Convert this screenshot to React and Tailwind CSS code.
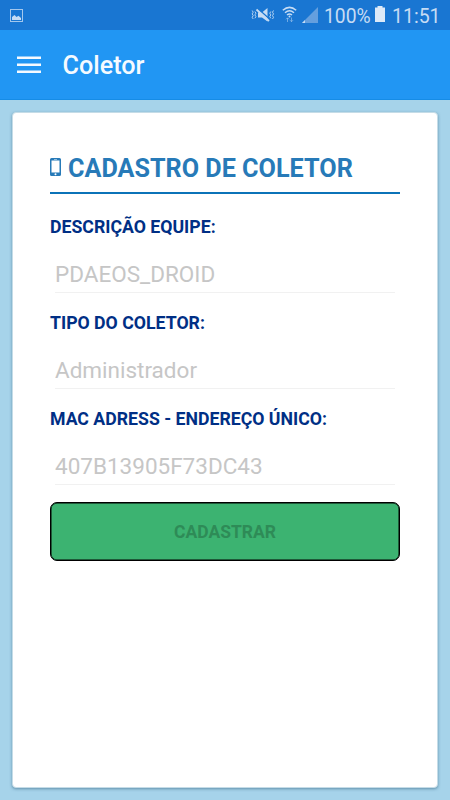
import React from 'react'

const fields = [
  { id: 'equipe', label: 'DESCRIÇÃO EQUIPE:', value: 'PDAEOS_DROID' },
  { id: 'tipo', label: 'TIPO DO COLETOR:', value: 'Administrador' },
  { id: 'mac', label: 'MAC ADRESS - ENDEREÇO ÚNICO:', value: '407B13905F73DC43' },
]

function StatusBar() {
  return (
    <div className="flex h-[30px] items-center bg-[#1976d2] pl-[10px] pr-[10px] text-[#c6dcf4]">
      <svg width="13" height="13" viewBox="0 0 13 13" className="shrink-0">
        <rect x="0.5" y="0.5" width="12" height="12" fill="none" stroke="currentColor" strokeOpacity="0.8" />
        <path d="M2 11V8l2.5-2 2 2 2-1.2L11 9v2z" fill="currentColor" />
      </svg>
      <div className="ml-auto flex items-center">
        {/* Vibrate / mute */}
        <svg width="24" height="18" viewBox="0 0 24 18" className="mr-[7px] shrink-0" fill="none" stroke="currentColor">
          <path d="M1.200 4.500l1 1.700-1 1.700 1 1.700-1 1.700 1 1.700M3.900 5.500l1 1.700-1 1.700 1 1.700-1 1.700M22.500 4.500l-1 1.700 1 1.700-1 1.700 1 1.700-1 1.700M19.800 5.500l-1 1.700 1 1.700-1 1.700 1 1.700" strokeWidth="0.9" />
          <path d="M7 6.500h4L16.500 2v13.500L11 11.500H7z" fill="currentColor" stroke="none" />
          <path d="M7 2.800l11 9.800" stroke="#1976d2" strokeWidth="1.400" />
          <path d="M5.500 3.500l12.500 11.500" strokeWidth="1.800" />
        </svg>
        <svg width="15" height="17" viewBox="0 0 15 17" className="mb-[1px] mr-[5px] shrink-0" fill="none" stroke="currentColor">
          <path d="M.8 4.200Q7.500-1.500 14.200 4.200M3 6.700q4.500-3.800 9 0M5 9q2.500-2 5 0" strokeWidth="1.500" />
          <circle cx="7.500" cy="10.500" r="1" fill="currentColor" stroke="none" />
          <path d="M5.500 16v-4M4 13.300l1.500-1.500L7 13.300M9.500 11.500v4M8 14.200l1.500 1.500 1.500-1.500" strokeOpacity="0.5" />
        </svg>
        <svg width="16" height="16" viewBox="0 0 16 16" className="mr-[6px] shrink-0">
          <path d="M16 0v16H0z" fill="#659fde" />
          <path d="M3 13v3H0z" fill="currentColor" />
        </svg>
        <span className="w-[51px] whitespace-nowrap pt-[3px] text-[19.300px] leading-none">100%</span>
        <svg width="10" height="16" viewBox="0 0 10 16" className="mb-[2px] shrink-0">
          <path d="M2.500 0h5v1.500H10V16H0V1.500h2.500z" fill="#dce9f8" />
        </svg>
        <span className="ml-[7px] w-[48px] whitespace-nowrap pt-[3px] text-[19.500px] leading-none">11:51</span>
      </div>
    </div>
  )
}

function AppBar() {
  return (
    <header className="flex h-[70px] items-center border-b border-[#168ce6] bg-[#2196f3] pl-[17px] text-[#f5faff]">
      <svg width="24" height="18" viewBox="0 0 24 18" fill="currentColor" className="shrink-0">
        <path d="M0 0.500h24v2.500H0zM0 7.500h24v2.500H0zM0 14.500h24v2.500H0z" />
      </svg>
      <h1 className="ml-[21.500px] pt-[3px] text-[25.200px] font-medium leading-none">Coletor</h1>
    </header>
  )
}

function Field({ field }) {
  return (
    <div className="h-24">
      <label htmlFor={field.id} className="block h-7 text-[17.700px] font-bold leading-7 text-[#002f85]">
        {field.label}
      </label>
      <div className="mx-[5px] mt-[8px] h-[44px] border-b border-[#f1f1f1]">
        <input
          id={field.id}
          disabled
          defaultValue={field.value}
          className="block h-[43px] w-full bg-transparent pt-[7px] text-[22.500px] leading-none text-[#c6c6c6]"
        />
      </div>
    </div>
  )
}

export default function App() {
  return (
    <div className="flex h-[800px] w-[450px] flex-col overflow-hidden bg-[#a6d3ea] font-['Roboto',sans-serif]">
      <StatusBar />
      <AppBar />
      <main className="mx-[12px] mb-[12px] mt-[12px] flex-1 rounded-[4px] border border-[#c5dce7] bg-white px-[37px] pt-[34px] shadow-[0_1px_3px_rgba(30,80,110,0.5)]">
        <div className="flex h-[47px] items-center border-b-2 border-[#0b73b8] pb-[3px] text-[#277ab8]">
          <svg width="11" height="18" viewBox="0 0 11 18" className="mb-[3px] shrink-0">
            <path fillRule="evenodd" fill="currentColor" d="M1.500 0h8Q11 0 11 1.500v15q0 1.500-1.500 1.500h-8Q0 18 0 16.500v-15Q0 0 1.500 0zM1.500 2.500v12h8v-12zM4 1.200v.6h3v-.6zM5.500 15.200a1 1 0 1 0 0 2 1 1 0 0 0 0-2z" />
          </svg>
          <h2 className="ml-[7px] whitespace-nowrap pt-[2px] text-[25.200px] font-bold leading-none">CADASTRO DE COLETOR</h2>
        </div>
        <form className="pt-[19px]">
          {fields.map((field) => (
            <Field key={field.id} field={field} />
          ))}
          <button
            type="button"
            disabled
            className="mt-px block h-[59px] w-full rounded-[7px] border border-black bg-[#3cb371] pt-[2px] text-[17.500px] font-bold text-[#2e8b57] shadow-[inset_0_0_0_0.5px_black]"
          >
            CADASTRAR
          </button>
        </form>
      </main>
    </div>
  )
}
